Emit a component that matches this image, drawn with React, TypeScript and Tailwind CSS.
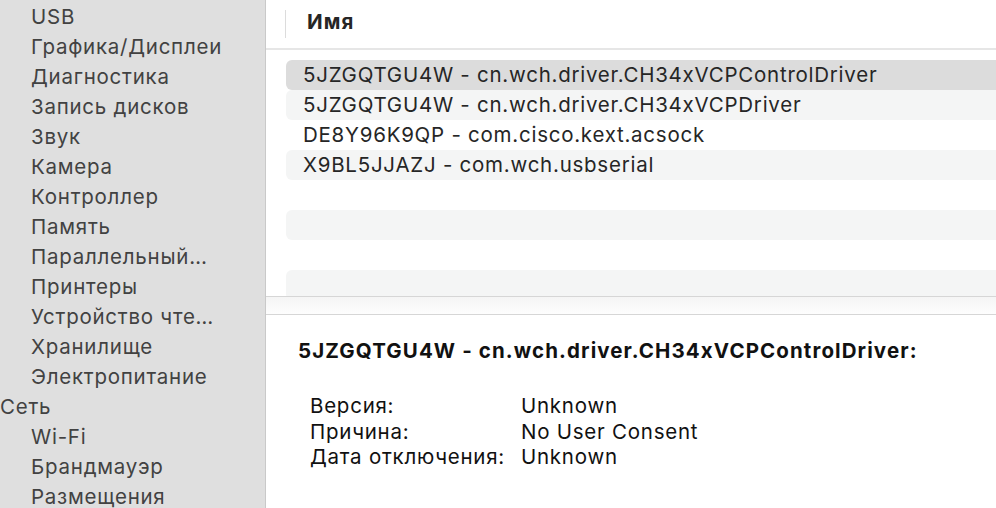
import React from 'react';

const sidebarItems: { label: string; level: number }[] = [
  { label: 'USB', level: 1 },
  { label: 'Графика/Дисплеи', level: 1 },
  { label: 'Диагностика', level: 1 },
  { label: 'Запись дисков', level: 1 },
  { label: 'Звук', level: 1 },
  { label: 'Камера', level: 1 },
  { label: 'Контроллер', level: 1 },
  { label: 'Память', level: 1 },
  { label: 'Параллельный…', level: 1 },
  { label: 'Принтеры', level: 1 },
  { label: 'Устройство чте…', level: 1 },
  { label: 'Хранилище', level: 1 },
  { label: 'Электропитание', level: 1 },
  { label: 'Сеть', level: 0 },
  { label: 'Wi-Fi', level: 1 },
  { label: 'Брандмауэр', level: 1 },
  { label: 'Размещения', level: 1 },
];

const extensions = [
  '5JZGQTGU4W - cn.wch.driver.CH34xVCPControlDriver',
  '5JZGQTGU4W - cn.wch.driver.CH34xVCPDriver',
  'DE8Y96K9QP - com.cisco.kext.acsock',
  'X9BL5JJAZJ - com.wch.usbserial',
  '',
  '',
  '',
  '',
];

const details = [
  { key: 'Версия:', value: 'Unknown' },
  { key: 'Причина:', value: 'No User Consent' },
  { key: 'Дата отключения:', value: 'Unknown' },
];

export default function App() {
  const selected = 0;

  return (
    <div
      className="flex h-[508px] w-[996px] overflow-hidden bg-white text-[20.5px] leading-[30px] tracking-[0.75px]"
      style={{ fontFamily: 'Inter, "Noto Sans", sans-serif' }}
    >
      {/* Sidebar */}
      <div className="w-[266px] shrink-0 overflow-hidden border-r border-[#c9c9c9] bg-[#dfdfdf] pt-[2px] text-[#424242]">
        {sidebarItems.map((item) => (
          <div
            key={item.label}
            className={`h-[30px] whitespace-nowrap ${item.level === 0 ? 'pl-0' : 'pl-[31px]'}`}
          >
            {item.label}
          </div>
        ))}
      </div>

      {/* Content */}
      <div className="flex min-w-0 flex-1 flex-col">
        {/* Column header */}
        <div className="flex h-[50px] shrink-0 items-center border-b-2 border-[#e6e6e6]">
          <div className="ml-[19px] h-[28px] w-px bg-[#dcdcdc]" />
          <div className="ml-[21px] pb-[4px] font-bold tracking-[1.1px] text-[#262626]">Имя</div>
        </div>

        {/* List */}
        <div className="h-[246px] shrink-0 overflow-hidden pt-[10px]">
          {extensions.map((name, i) => (
            <div
              key={i}
              className={`ml-[20px] h-[30px] whitespace-nowrap rounded-l-[6px] pl-[17px] text-[#262626] ${
                i === selected ? 'bg-[#dcdcdc]' : i % 2 === 1 ? 'bg-[#f4f5f5]' : 'bg-white'
              }`}
            >
              {name}
            </div>
          ))}
        </div>

        {/* Split divider */}
        <div className="h-[19px] shrink-0 border-y border-[#d6d6d6] bg-gradient-to-b from-[#f5f5f5] to-[#fdfdfd]" />

        {/* Detail */}
        <div className="flex-1 pl-[32px] pt-[21px] text-[#111]">
          <div className="whitespace-nowrap font-bold tracking-[1.1px]">
            5JZGQTGU4W - cn.wch.driver.CH34xVCPControlDriver:
          </div>
          <div className="mt-[27px] pl-[12px] leading-[25.5px]">
            {details.map((d) => (
              <div key={d.key} className="flex whitespace-nowrap">
                <div className="w-[211px]">{d.key}</div>
                <div>{d.value}</div>
              </div>
            ))}
          </div>
        </div>
      </div>
    </div>
  );
}
